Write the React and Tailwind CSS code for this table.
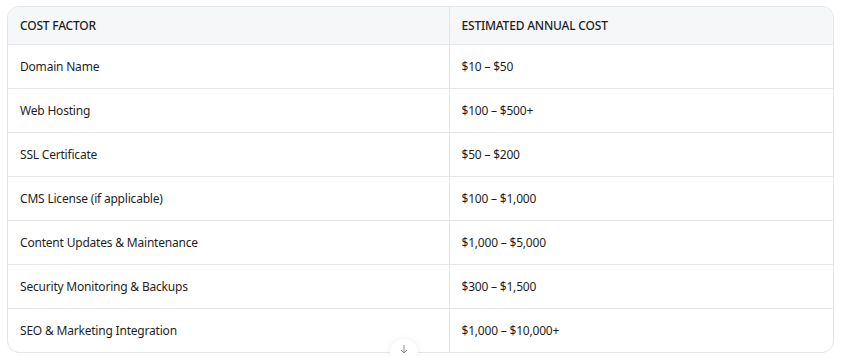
import React from 'react';

const rows = [
  ['Domain Name', '$10 – $50'],
  ['Web Hosting', '$100 – $500+'],
  ['SSL Certificate', '$50 – $200'],
  ['CMS License (if applicable)', '$100 – $1,000'],
  ['Content Updates & Maintenance', '$1,000 – $5,000'],
  ['Security Monitoring & Backups', '$300 – $1,500'],
  ['SEO & Marketing Integration', '$1,000 – $10,000+'],
];

export default function App() {
  return (
    <div className="w-[845px] h-[357px] bg-white overflow-hidden relative" style={{ fontFamily: '"Noto Sans", "Open Sans", sans-serif' }}>
      <div className="ml-[7px] mt-[6px] w-[827px] rounded-[12px] border border-[#e5e5ea] overflow-hidden">
        <table className="w-full border-collapse text-[12px] tracking-[-0.2px] text-[#1f1f1f]">
          <thead>
            <tr className="bg-[#f6f7f9] h-[37px]">
              <th className="text-left font-medium px-3 pt-[2px] w-[441px] border-r border-[#e5e5ea] border-b">COST FACTOR</th>
              <th className="text-left font-medium px-3 pt-[2px] border-b border-[#e5e5ea]">ESTIMATED ANNUAL COST</th>
            </tr>
          </thead>
          <tbody>
            {rows.map(([a, b], i) => (
              <tr key={a} className={`h-[44px] ${i < rows.length - 1 ? 'border-b border-[#e5e5ea]' : ''}`}>
                <td className="px-3 pt-[2px] border-r border-[#e5e5ea]">{a}</td>
                <td className="px-3 pt-[2px]">{b}</td>
              </tr>
            ))}
          </tbody>
        </table>
      </div>
      {/* scroll-down button */}
      <div className="absolute left-[390px] top-[339px] w-[28px] h-[28px] rounded-full bg-white shadow-[0_0_6px_rgba(0,0,0,0.08)] flex items-start justify-center pt-[5px]">
        <svg width="10" height="10" viewBox="0 0 10 10" fill="none" stroke="#8a8a8a" strokeWidth="1">
          <path d="M5 1v8M2 6l3 3 3-3" />
        </svg>
      </div>
    </div>
  );
}
